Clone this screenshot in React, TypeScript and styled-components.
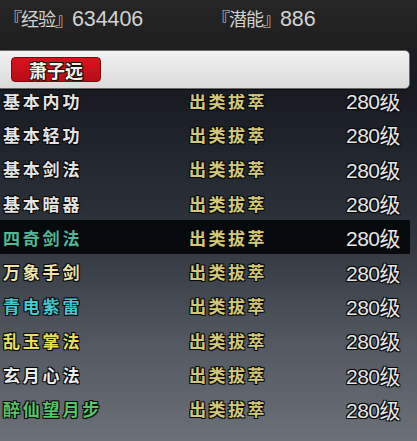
import React from "react";
import styled, { createGlobalStyle } from "styled-components";

const GlobalStyle = createGlobalStyle`
  html, body {
    margin: 0;
    padding: 0;
    width: 417px;
    height: 441px;
    overflow: hidden;
    background: #1f2024;
    font-family: "Noto Sans CJK SC", "Liberation Sans", sans-serif;
  }
`;

const Screen = styled.div`
  width: 417px;
  height: 441px;
  display: flex;
  flex-direction: column;
  background: linear-gradient(180deg, #1b1c20 0px, #191c23 100px, #2e333b 230px, #525760 340px, #6c7178 441px);
  overflow: hidden;
`;

const Header = styled.div`
  height: 50px;
  display: flex;
  align-items: flex-start;
  padding: 6px 0 0 4px;
  box-sizing: border-box;
  background: linear-gradient(180deg, #262626, #1d1d1d);
`;

const Stat = styled.div<{ $width: number }>`
  width: ${(p) => p.$width}px;
  font-family: "Liberation Sans", "Noto Sans CJK SC", sans-serif;
  font-size: 21.5px;
  line-height: 24px;
  color: #d2d2d2;
  letter-spacing: -0.1px;
`;

const Bracket = styled.span`
  font-family: "Noto Sans CJK SC", sans-serif;
  font-size: 18px;
  letter-spacing: -1px;
`;

const TabBar = styled.div`
  height: 39px;
  width: 414px;
  margin-left: -4px;
  padding: 6px 0 0 14px;
  box-sizing: border-box;
  border: 1px solid #6a6a6a;
  border-radius: 5px;
  background: linear-gradient(180deg, #f2f2f2 0%, #e6e6e6 50%, #dadada 100%);
  box-shadow: 0 1px 1px rgba(0, 0, 0, 0.6);
`;

const NameTag = styled.div`
  width: 90px;
  height: 25px;
  box-sizing: border-box;
  display: flex;
  align-items: center;
  justify-content: center;
  background: linear-gradient(180deg, #d8141f, #b80c18);
  border: 1px solid #7c0a10;
  border-radius: 4px;
  color: #f4f0e4;
  font-size: 18px;
  font-weight: 700;
  text-shadow: -1px -1px 0 #111, 1px -1px 0 #111, -1px 1px 0 #111, 1px 1px 0 #111;
`;

const Viewport = styled.div`
  flex: 1;
  width: 410px;
  overflow: hidden;
  margin-top: 5px;
`;

const List = styled.div`
  margin-top: -11px;
  display: flex;
  flex-direction: column;
`;

const Row = styled.div<{ $active?: boolean }>`
  height: 34.3px;
  display: grid;
  grid-template-columns: 186px 1fr 90px;
  align-items: center;
  padding: 0 10px 0 3px;
  background: ${(p) => (p.$active ? "rgba(4, 6, 10, 0.92)" : "transparent")};
`;

const outline =
  "-1px -1px 0 #0a0a0a, 1px -1px 0 #0a0a0a, -1px 1px 0 #0a0a0a, 1px 1px 0 #0a0a0a, 0 0 2px #000";

const Skill = styled.div<{ $color: string }>`
  color: ${(p) => p.$color};
  font-size: 17px;
  font-weight: 700;
  letter-spacing: 2.8px;
  text-shadow: ${outline};
  white-space: nowrap;
`;

const Grade = styled.div`
  color: #d2c878;
  font-size: 17px;
  font-weight: 700;
  letter-spacing: 2.5px;
  text-shadow: ${outline};
`;

const Level = styled.div`
  text-align: right;
  color: #e6e6e6;
  font-family: "Liberation Sans", "Noto Sans CJK SC", sans-serif;
  font-size: 21px;
  letter-spacing: -0.5px;
  text-shadow: ${outline};
`;

const skills = [
  { name: "基本内功", color: "#e4e4e4" },
  { name: "基本轻功", color: "#e4e4e4" },
  { name: "基本剑法", color: "#e4e4e4" },
  { name: "基本暗器", color: "#e4e4e4" },
  { name: "四奇剑法", color: "#4fb897", active: true },
  { name: "万象手剑", color: "#ece4a8" },
  { name: "青电紫雷", color: "#47c7cf" },
  { name: "乱玉掌法", color: "#e6e05a" },
  { name: "玄月心法", color: "#ececec" },
  { name: "醉仙望月步", color: "#58c46a" },
];

const App: React.FC = () => {
  return (
    <>
      <GlobalStyle />
      <Screen>
        <Header>
          <Stat $width={208}>
            <Bracket>『经验』</Bracket>634406
          </Stat>
          <Stat $width={150}>
            <Bracket>『潜能』</Bracket>886
          </Stat>
        </Header>
        <TabBar>
          <NameTag>萧子远</NameTag>
        </TabBar>
        <Viewport>
          <List>
            {skills.map((s) => (
              <Row key={s.name} $active={s.active}>
                <Skill $color={s.color}>{s.name}</Skill>
                <Grade>出类拔萃</Grade>
                <Level>280级</Level>
              </Row>
            ))}
          </List>
        </Viewport>
      </Screen>
    </>
  );
};

export default App;
